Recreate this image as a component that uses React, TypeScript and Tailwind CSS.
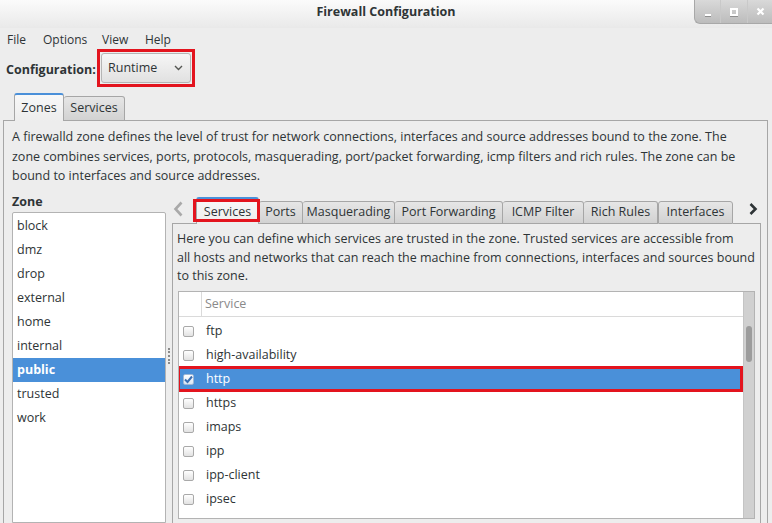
import React from "react";

const zones = ["block", "dmz", "drop", "external", "home", "internal", "public", "trusted", "work"];
const services = ["ftp", "high-availability", "http", "https", "imaps", "ipp", "ipp-client", "ipsec"];

const innerTabs = [
  { label: "Ports", w: "w-[44px]" },
  { label: "Masquerading", w: "w-[92px]" },
  { label: "Port Forwarding", w: "w-[108px]" },
  { label: "ICMP Filter", w: "w-[81px]" },
  { label: "Rich Rules", w: "w-[74px]" },
  { label: "Interfaces", w: "w-[75px]" },
];

const Checkbox = ({ checked }: { checked?: boolean }) => (
  <div
    className={
      checked
        ? "w-[11px] h-[11px] shrink-0 rounded-[2px] border border-[#9fb7d6] bg-gradient-to-b from-[#ffffff] to-[#dbe6f3] flex items-center justify-center"
        : "w-[11px] h-[11px] shrink-0 rounded-[2px] border border-[#a9a9a9] bg-gradient-to-b from-[#ffffff] to-[#e2e2e2]"
    }
  >
    {checked && (
      <svg width="9" height="9" viewBox="0 0 9 9">
        <path d="M1 4.5 L3.5 7 L8 1.5" fill="none" stroke="#3a6fb3" strokeWidth="2" />
      </svg>
    )}
  </div>
);

const TitleBar = () => (
  <div className="h-[28px] shrink-0 grid grid-cols-[1fr_auto_1fr] bg-gradient-to-b from-[#fbfbfb] to-[#e9e9e9]">
    <div />
    <div className="h-[24px] flex items-center font-bold text-[#2e3436]">Firewall Configuration</div>
    <div className="flex justify-end">
      <div className="h-[24px] flex rounded-bl-[6px] border-l border-b border-[#a8a8a8] bg-gradient-to-b from-[#d9d9d9] to-[#bcbcbc] overflow-hidden">
        <div className="w-[26px] flex items-end justify-center pb-[7px] border-r border-[#c9c9c9]">
          <div className="w-[6px] h-[2px] bg-white shadow-[0_1px_0_#8f8f8f]" />
        </div>
        <div className="w-[27px] flex items-center justify-center border-r border-[#c9c9c9]">
          <div className="w-[8px] h-[8px] border-2 border-white shadow-[0_1px_0_#8f8f8f]" />
        </div>
        <div className="w-[24px] flex items-center justify-center">
          <svg width="9" height="9" viewBox="0 0 9 9">
            <path d="M1.5 1.5 L7.5 7.5 M7.5 1.5 L1.5 7.5" stroke="#ffffff" strokeWidth="2.2" />
          </svg>
        </div>
      </div>
    </div>
  </div>
);

export default function App() {
  return (
    <div className="w-[772px] h-[523px] overflow-hidden flex flex-col bg-[#ededed] text-[#2e3436] text-[12.5px] font-['Open_Sans',sans-serif]">
      <TitleBar />

      {/* menu */}
      <div className="h-[21px] shrink-0 pt-[3px] pl-[7px] flex leading-[18px] text-[12px]">
        <span className="w-[36px]">File</span>
        <span className="w-[59px]">Options</span>
        <span className="w-[43px]">View</span>
        <span>Help</span>
      </div>

      {/* configuration */}
      <div className="h-[39px] shrink-0 pl-[6px] flex items-start">
        <span className="w-[91px] font-bold mt-[12px] leading-[18px] whitespace-nowrap">Configuration:</span>
        <div className="w-[98px] h-[38px] border-[3px] border-[#e3141e] p-[1px]">
          <div className="h-full rounded-[3px] border border-[#b5b5b5] bg-gradient-to-b from-[#f6f6f6] to-[#e1e1e1] flex items-center justify-between pl-[6px] pr-[7px]">
            <span>Runtime</span>
            <svg width="9" height="6" viewBox="0 0 9 6">
              <polyline points="1,1 4.5,4.5 8,1" fill="none" stroke="#555753" strokeWidth="1.4" />
            </svg>
          </div>
        </div>
      </div>

      {/* outer tabs */}
      <div className="h-[33px] shrink-0 ml-[3px] w-[765px] flex items-end">
        <div className="w-[11px] border-b border-[#a6a6a6]" />
        <div className="w-[50px] h-[28px] rounded-t-[3px] border-x border-[#a6a6a6] border-t-2 border-t-[#4a90d9] bg-gradient-to-b from-[#f8f8f8] to-[#ededed] flex items-center justify-center pt-[1px]">
          Zones
        </div>
        <div className="w-[61px] h-[25px] rounded-t-[3px] border-t border-r border-b border-[#a6a6a6] bg-gradient-to-b from-[#e6e6e6] to-[#d2d2d2] flex items-center justify-center">
          Services
        </div>
        <div className="flex-1 border-b border-[#a6a6a6]" />
      </div>

      {/* outer panel */}
      <div className="flex-1 min-h-0 ml-[3px] w-[765px] border-x border-[#a6a6a6] flex flex-col">
        <div className="h-[70px] shrink-0 pt-[6px] pl-[8px] leading-[19.5px] whitespace-nowrap">
          <div>A firewalld zone defines the level of trust for network connections, interfaces and source addresses bound to the zone. The</div>
          <div>zone combines services, ports, protocols, masquerading, port/packet forwarding, icmp filters and rich rules. The zone can be</div>
          <div>bound to interfaces and source addresses.</div>
        </div>

        <div className="flex-1 min-h-0 flex pl-[8px]">
          {/* zone column */}
          <div className="w-[154px] flex flex-col">
            <div className="h-[21px] leading-[22px] font-bold">Zone</div>
            <div className="flex-1 bg-white border border-[#b3b3b3] rounded-t-[2px] pt-[1px]">
              {zones.map((z) => (
                <div
                  key={z}
                  className={
                    z === "public"
                      ? "h-[24px] flex items-center pl-[4px] bg-[#4a90d9] text-white font-bold"
                      : "h-[24px] flex items-center pl-[4px]"
                  }
                >
                  {z}
                </div>
              ))}
            </div>
          </div>

          {/* pane handle */}
          <div className="w-[6px] flex justify-center pt-[157px]">
            <div className="h-[16px] border-l-2 border-dotted border-[#8b8b8b]" />
          </div>

          {/* inner notebook */}
          <div className="w-[589px] flex flex-col">
            <div className="h-[33px] shrink-0 flex items-end">
              <div className="w-[24px] h-[33px] border-b border-[#a6a6a6] flex items-start pt-[10px] pl-[1px]">
                <svg width="11" height="16" viewBox="0 0 11 16">
                  <polyline points="8.5,1.5 2.5,8 8.5,14.5" fill="none" stroke="#a9a9a9" strokeWidth="2.6" />
                </svg>
              </div>
              <div className="relative w-[63px] h-[27px] rounded-t-[3px] border-x border-[#a6a6a6] border-t-2 border-t-[#4a90d9] bg-gradient-to-b from-[#f8f8f8] to-[#ededed] flex items-center justify-center pt-[2px]">
                Services
                <div className="absolute left-[-4px] right-[-2px] top-[0px] bottom-[2px] border-[3px] border-[#e3141e]" />
              </div>
              {innerTabs.map((t, i) => (
                <div
                  key={t.label}
                  className={
                    t.w +
                    " h-[23px] rounded-t-[3px] border-t border-b border-[#a6a6a6] bg-gradient-to-b from-[#e6e6e6] to-[#d2d2d2] flex items-center justify-center whitespace-nowrap " +
                    (i === innerTabs.length - 1 ? "border-x" : "border-r")
                  }
                >
                  {t.label}
                </div>
              ))}
              <div className="flex-1 h-[33px] border-b border-[#a6a6a6] flex items-start justify-end pt-[12px] pr-[3px]">
                <svg width="9" height="12" viewBox="0 0 9 12">
                  <polyline points="1.5,1 6.5,6 1.5,11" fill="none" stroke="#2e3436" strokeWidth="2.6" />
                </svg>
              </div>
            </div>

            <div className="flex-1 min-h-0 border-x border-[#a6a6a6] flex flex-col">
              <div className="pt-[6px] pl-[4px] leading-[18.5px] whitespace-nowrap">
                <div>Here you can define which services are trusted in the zone. Trusted services are accessible from</div>
                <div>all hosts and networks that can reach the machine from connections, interfaces and sources bound</div>
                <div>to this zone.</div>
              </div>

              <div className="mt-[5px] ml-[5px] w-[577px] h-[228px] shrink-0 border border-[#b3b3b3] bg-white flex overflow-hidden">
                <div className="flex-1 flex flex-col">
                  <div className="h-[25px] shrink-0 flex border-b border-[#dadada]">
                    <div className="w-[23px] border-r border-[#dadada]" />
                    <div className="pl-[3px] pt-[1px] flex items-center text-[#8a8a8a]">Service</div>
                  </div>
                  <div className="pt-[3px]">
                    {services.map((s) => (
                      <div
                        key={s}
                        className={
                          s === "http"
                            ? "relative h-[24px] flex items-center pl-[4px] bg-[#4a90d9] text-white"
                            : "h-[24px] flex items-center pl-[4px]"
                        }
                      >
                        <Checkbox checked={s === "http"} />
                        <span className="ml-[12px]">{s}</span>
                        {s === "http" && (
                          <div className="absolute left-[-2px] right-[0px] top-[-2px] bottom-[0px] border-[3px] border-[#e3141e]" />
                        )}
                      </div>
                    ))}
                    <div className="h-[24px] flex items-center pl-[4px]">
                      <Checkbox />
                    </div>
                  </div>
                </div>
                <div className="w-[11px] bg-[#d0d0d0] border-l border-[#c4c4c4] flex justify-center pt-[34px]">
                  <div className="w-[6px] h-[36px] rounded-full bg-[#9c9c9c]" />
                </div>
              </div>
            </div>
          </div>
        </div>
      </div>
    </div>
  );
}
